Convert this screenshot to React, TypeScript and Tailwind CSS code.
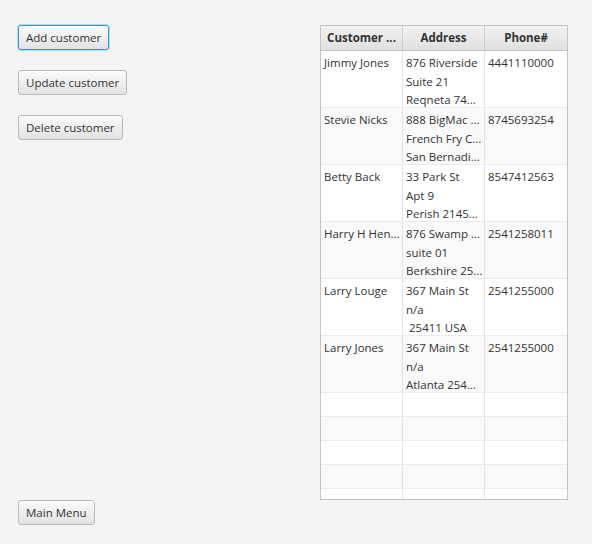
import React from 'react';

interface Customer {
  name: string;
  address: string[];
  phone: string;
}

const customers: Customer[] = [
  { name: 'Jimmy Jones', address: ['876 Riverside', 'Suite 21', 'Reqneta 74...'], phone: '4441110000' },
  { name: 'Stevie Nicks', address: ['888 BigMac ...', 'French Fry C...', 'San Bernadi...'], phone: '8745693254' },
  { name: 'Betty Back', address: ['33 Park St', 'Apt 9', 'Perish 2145...'], phone: '8547412563' },
  { name: 'Harry H Hen...', address: ['876 Swamp ...', 'suite 01', 'Berkshire 25...'], phone: '2541258011' },
  { name: 'Larry Louge', address: ['367 Main St', 'n/a', '\u00a025411 USA'], phone: '2541255000' },
  { name: 'Larry Jones', address: ['367 Main St', 'n/a', 'Atlanta 254...'], phone: '2541255000' },
];

function FxButton({ label, focused }: { label: string; focused?: boolean }) {
  return (
    <button
      className={
        'h-[25px] self-start whitespace-nowrap rounded-[3px] border bg-gradient-to-b from-[#fbfbfb] to-[#e2e2e2] px-[7px] text-[11.5px] leading-none text-[#333] ' +
        (focused ? 'border-[#2a9fd6] shadow-[0_0_0_1px_#a9dcf3]' : 'border-[#b8b8b8]')
      }
    >
      {label}
    </button>
  );
}

export default function App() {
  const emptyRows = [0, 1, 2, 3, 4];

  return (
    <div className="flex h-[544px] w-[592px] bg-[#f4f4f4] font-['Open_Sans',sans-serif] text-[11.5px] text-[#333]">
      {/* Buttons */}
      <div className="flex w-[320px] flex-col justify-between pb-[19px] pl-[18px] pt-[25px]">
        <div className="flex flex-col gap-[20px]">
          <FxButton label="Add customer" focused />
          <FxButton label="Update customer" />
          <FxButton label="Delete customer" />
        </div>
        <FxButton label="Main Menu" />
      </div>

      {/* Table */}
      <div className="pt-[25px]">
        <div className="flex h-[475px] w-[248px] flex-col overflow-hidden border border-[#c4c4c4] bg-white">
          <div className="grid h-[25px] shrink-0 grid-cols-[82px_82px_82px] border-b border-[#c4c4c4] bg-gradient-to-b from-[#f2f2f2] to-[#e0e0e0] font-bold">
            <div className="flex items-center justify-center border-r border-[#cfcfcf]">Customer ...</div>
            <div className="flex items-center justify-center border-r border-[#cfcfcf]">Address</div>
            <div className="flex items-center justify-center">Phone#</div>
          </div>

          {customers.map((c, i) => (
            <div
              key={c.name + i}
              className={
                'grid h-[57px] shrink-0 grid-cols-[82px_82px_82px] border-b border-[#ececec] leading-[18.5px] ' +
                (i % 2 === 0 ? 'bg-white' : 'bg-[#f9f9f9]')
              }
            >
              <div className="overflow-hidden whitespace-nowrap border-r border-[#e4e4e4] px-[3px] pt-[3px]">{c.name}</div>
              <div className="overflow-hidden whitespace-pre border-r border-[#e4e4e4] px-[3px] pt-[3px]">
                {c.address.map((line) => (
                  <div key={line}>{line}</div>
                ))}
              </div>
              <div className="overflow-hidden px-[3px] pt-[3px]">{c.phone}</div>
            </div>
          ))}

          {emptyRows.map((r) => (
            <div
              key={r}
              className={
                'grid h-[24px] shrink-0 grid-cols-[82px_82px_82px] border-b border-[#ececec] ' +
                (r % 2 === 0 ? 'bg-white' : 'bg-[#f9f9f9]')
              }
            >
              <div className="border-r border-[#e4e4e4]" />
              <div className="border-r border-[#e4e4e4]" />
              <div />
            </div>
          ))}
        </div>
      </div>
    </div>
  );
}
